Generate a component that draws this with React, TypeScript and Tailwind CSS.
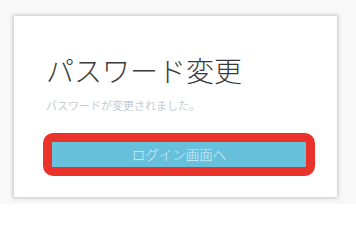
import React from "react";

export default function App() {
  const jp = { fontFamily: '"Noto Sans CJK JP", "Noto Sans", sans-serif' };
  return (
    <div className="w-[356px] h-[204px] bg-[#f8f8f8] pt-[16px] pl-[14px]" style={jp}>
      <div className="w-[323px] h-[181px] bg-white shadow-[0_0_4px_1px_rgba(0,0,0,0.22)] pt-[36px] pl-[32px]">
        <h1 className="text-[28px] leading-[36px] text-[#3a3a3a] font-light">パスワード変更</h1>
        <p className="mt-[9px] text-[11px] leading-[16px] text-[#c4cbd3]">パスワードが変更されました。</p>
        <div className="mt-[20px] -ml-[3px] w-[272px] h-[43px] rounded-[10px] bg-[#e8322a] p-[9px]">
          <div className="h-[25px] bg-[#67c0dc] flex items-center justify-center text-[13.5px] text-[#d9eef6] font-light">
            ログイン画面へ
          </div>
        </div>
      </div>
    </div>
  );
}
